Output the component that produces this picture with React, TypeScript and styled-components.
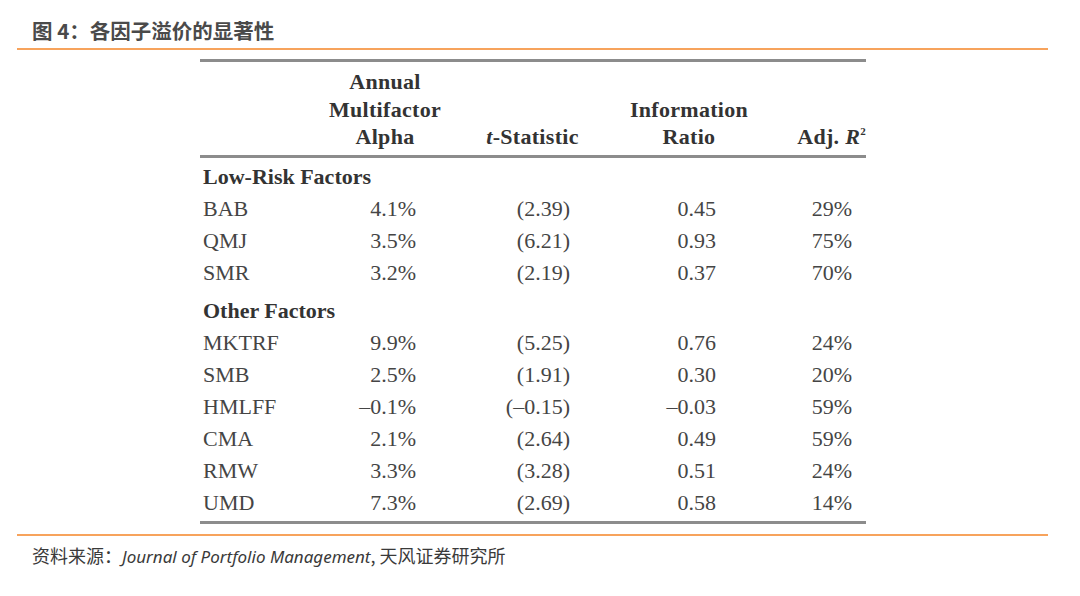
import React from "react";
import styled, { createGlobalStyle } from "styled-components";

const GlobalStyle = createGlobalStyle`
  html, body {
    margin: 0;
    padding: 0;
    background: #ffffff;
  }
`;

type Row = { name: string; alpha: string; t: string; ir: string; r2: string };

const lowRisk: Row[] = [
  { name: "BAB", alpha: "4.1%", t: "(2.39)", ir: "0.45", r2: "29%" },
  { name: "QMJ", alpha: "3.5%", t: "(6.21)", ir: "0.93", r2: "75%" },
  { name: "SMR", alpha: "3.2%", t: "(2.19)", ir: "0.37", r2: "70%" },
];

const other: Row[] = [
  { name: "MKTRF", alpha: "9.9%", t: "(5.25)", ir: "0.76", r2: "24%" },
  { name: "SMB", alpha: "2.5%", t: "(1.91)", ir: "0.30", r2: "20%" },
  { name: "HMLFF", alpha: "–0.1%", t: "(–0.15)", ir: "–0.03", r2: "59%" },
  { name: "CMA", alpha: "2.1%", t: "(2.64)", ir: "0.49", r2: "59%" },
  { name: "RMW", alpha: "3.3%", t: "(3.28)", ir: "0.51", r2: "24%" },
  { name: "UMD", alpha: "7.3%", t: "(2.69)", ir: "0.58", r2: "14%" },
];

function Section({ title, rows, first }: { title: string; rows: Row[]; first?: boolean }) {
  return (
    <>
      <GroupTitle $first={first}>{title}</GroupTitle>
      {rows.map((r) => (
        <React.Fragment key={r.name}>
          <NameCell>{r.name}</NameCell>
          <ValueCell $pad={34}>{r.alpha}</ValueCell>
          <ValueCell $pad={45}>{r.t}</ValueCell>
          <ValueCell $pad={47}>{r.ir}</ValueCell>
          <ValueCell $pad={14}>{r.r2}</ValueCell>
        </React.Fragment>
      ))}
    </>
  );
}

export default function App() {
  return (
    <Page>
      <GlobalStyle />
      <Title>图 4：各因子溢价的显著性</Title>
      <OrangeRule />
      <TableWrap>
        <Table>
          <HeadRow>
            <HeadCell />
            <HeadCell $align="center">
              Annual
              <br />
              Multifactor
              <br />
              Alpha
            </HeadCell>
            <HeadCell $align="center">
              <i>t</i>-Statistic
            </HeadCell>
            <HeadCell $align="center">
              Information
              <br />
              Ratio
            </HeadCell>
            <HeadCell $align="right">
              Adj. <i>R</i>
              <Sup>2</Sup>
            </HeadCell>
          </HeadRow>
          <Body>
            <Section title="Low-Risk Factors" rows={lowRisk} first />
            <Section title="Other Factors" rows={other} />
          </Body>
        </Table>
      </TableWrap>
      <OrangeRule />
      <Source>
        资料来源：<em>Journal of Portfolio Management</em>,&nbsp;天风证券研究所
      </Source>
    </Page>
  );
}

const Page = styled.div`
  width: 1080px;
  height: 596px;
  padding: 18px 32px 0 17px;
  box-sizing: border-box;
  display: flex;
  flex-direction: column;
`;

const Title = styled.div`
  font-family: "Noto Sans CJK SC", "Noto Sans", sans-serif;
  font-weight: 700;
  font-size: 20.5px;
  line-height: 24px;
  color: #4a4a4a;
  padding-left: 15px;
`;

const OrangeRule = styled.div`
  height: 2px;
  background: #f7a35c;
  margin-top: 6px;
`;

const TableWrap = styled.div`
  padding: 9px 0 4px 183px;
`;

const Table = styled.div`
  width: 666px;
  font-family: "Liberation Serif", "DejaVu Serif", serif;
  color: #454545;
  border-top: 3px solid #8c8c8c;
  border-bottom: 3px solid #8c8c8c;
`;

const COLS = "120px 130px 165px 148px 103px";

const HeadRow = styled.div`
  display: grid;
  grid-template-columns: ${COLS};
  align-items: end;
  padding: 6px 0 4px;
  border-bottom: 3px solid #8c8c8c;
`;

const HeadCell = styled.div<{ $align?: "center" | "right" }>`
  font-weight: 700;
  font-size: 22px;
  line-height: 27.5px;
  letter-spacing: 0.3px;
  color: #333;
  text-align: ${({ $align }) => $align || "left"};
  i {
    font-style: italic;
  }
`;

const Sup = styled.sup`
  font-size: 11px;
  vertical-align: 9px;
  line-height: 0;
`;

const Body = styled.div`
  display: grid;
  grid-template-columns: ${COLS};
  padding: 3px 0 2px;
  font-size: 22px;
  line-height: 32px;
`;

const GroupTitle = styled.div<{ $first?: boolean }>`
  grid-column: 1 / -1;
  font-weight: 700;
  color: #333;
  padding-left: 3px;
  margin-top: ${({ $first }) => ($first ? 0 : 6)}px;
`;

const NameCell = styled.div`
  padding-left: 3px;
`;

const ValueCell = styled.div<{ $pad: number }>`
  text-align: right;
  padding-right: ${({ $pad }) => $pad}px;
`;

const Source = styled.div`
  font-family: "Noto Sans CJK SC", "Noto Sans", sans-serif;
  font-size: 18px;
  line-height: 22px;
  color: #3a3a3a;
  padding: 8px 0 0 15px;
  em {
    font-family: "Noto Sans", sans-serif;
    font-size: 17px;
    font-style: italic;
  }
`;
